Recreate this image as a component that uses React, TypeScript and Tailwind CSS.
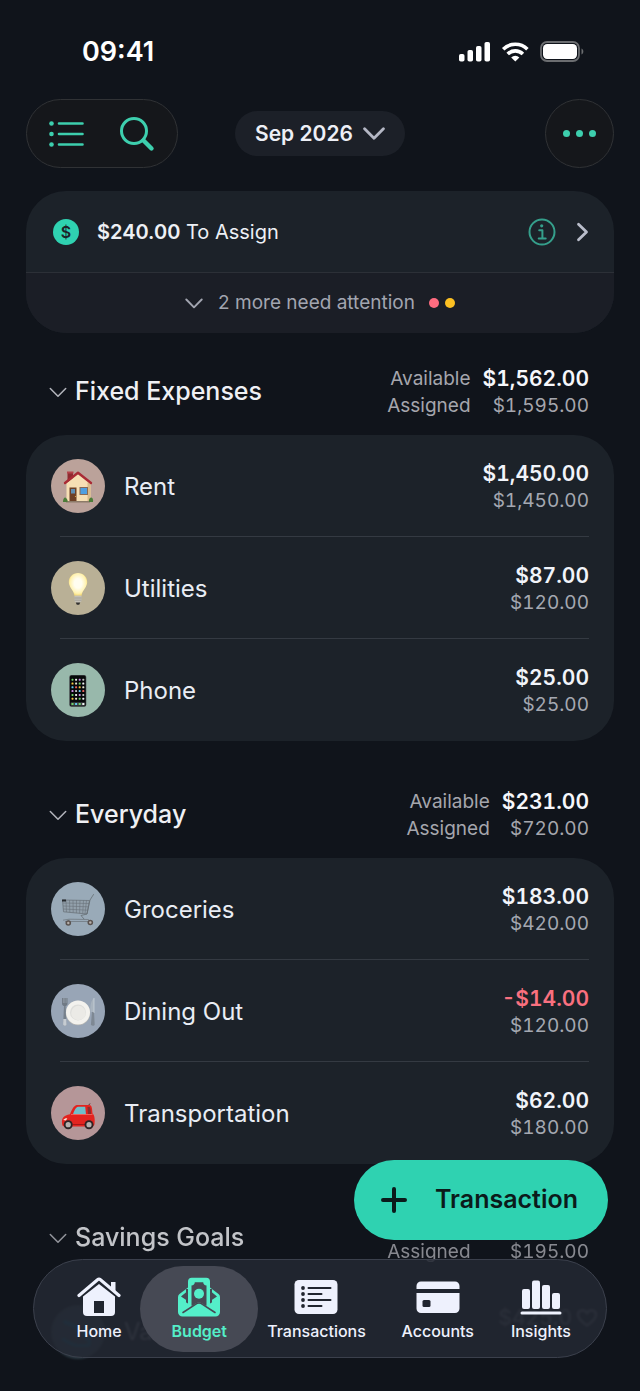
import type { ReactNode } from 'react';

interface Category {
  name: string;
  available: string;
  assigned: string;
  color: string;
  icon: ReactNode;
}

interface Group {
  name: string;
  available: string;
  assigned: string;
  categories: Category[];
}

function ChevronDown({ width, stroke, className }: { width: number; stroke: number; className: string }) {
  return (
    <svg width={width} viewBox="0 0 18 11" fill="none" stroke="currentColor" strokeWidth={stroke} strokeLinecap="round" strokeLinejoin="round" className={className} aria-hidden="true">
      <path d="M1.300 1.500 9 9.300l7.700-7.800" />
    </svg>
  );
}

function HouseArt() {
  return (
    <svg viewBox="0 0 54 54" className="size-full" aria-hidden="true">
      <path d="M16.500 13h5.500v7l-5.500 4z" fill="#8f2a30" />
      <path d="M16 12.500h6.500v2H16z" fill="#b5434a" />
      <path d="M15.500 24 27 15l12.500 9v19H15.500z" fill="#f6dfb4" />
      <path d="M36.500 23l3 2v18h-3z" fill="#d9ba89" />
      <path d="M14 24 27 13.800 40 24" fill="none" stroke="#a92b35" strokeWidth="2.400" strokeLinecap="round" strokeLinejoin="round" />
      <path d="M18.500 28.500h7V43h-7z" fill="#6d4026" />
      <path d="M20 30h4v4.500h-4z" fill="#5f8fb5" />
      <circle cx="24.500" cy="37.500" r=".6" fill="#e8b54d" />
      <path d="M28.500 28h8.500v8h-8.500z" fill="#8a6b55" />
      <path d="M29.500 29h6.500v6h-6.500z" fill="#4f9fe0" />
      <path d="M15 42h24v1.500H15z" fill="#8c7a68" />
      <path d="M12 43c0-4 2-5.500 3.500-3.500C17 41 17 43 16 43zM38 43c-.5-2.500.5-4 2-4.500 1.500 0 2.500 2 2 4.500z" fill="#4b7c38" />
    </svg>
  );
}

function BulbArt() {
  return (
    <svg viewBox="0 0 54 54" className="size-full" aria-hidden="true">
      <defs>
        <radialGradient id="bulb" cx=".5" cy=".45" r=".58">
          <stop offset=".35" stopColor="#fffdf0" />
          <stop offset=".75" stopColor="#fff2b0" />
          <stop offset="1" stopColor="#f2cf59" />
        </radialGradient>
      </defs>
      <path d="M27 12c-5.300 0-9.200 4-9.200 9 0 5.500 4.800 7.500 5.700 14h7c.9-6.500 5.700-8.500 5.700-14 0-5-3.900-9-9.200-9z" fill="url(#bulb)" />
      <path d="M23.500 34.500h7v5.500l-2 2h-3l-2-2z" fill="#c4c0b6" />
      <path d="M23.500 37h7M23.500 39.200h7" stroke="#96938c" strokeWidth=".7" />
      <path d="M24.800 41.500h4.400l-1 2.200h-2.400z" fill="#33312f" />
    </svg>
  );
}

const APP_COLORS = ['#6fd36b', '#f2f2f2', '#c88be0', '#bdbdbd', '#62c6ee', '#e9605a', '#f4c63d', '#e8e3d0'];

function PhoneArt() {
  const dots = Array.from({ length: 24 }, (_, i) => ({
    x: 20.500 + (i % 4) * 3.600,
    y: 15.700 + Math.floor(i / 4) * 3.800,
    fill: APP_COLORS[(i + Math.floor(i / 4) * 2) % APP_COLORS.length],
  }));
  return (
    <svg viewBox="0 0 54 54" className="size-full" aria-hidden="true">
      <rect x="18.300" y="12" width="17" height="31.800" rx="2" fill="#4c5254" />
      <rect x="18.900" y="12.500" width="15.800" height="30.800" rx="1.600" fill="#07080a" />
      {dots.map((d) => (
        <rect key={`${d.x}-${d.y}`} x={d.x} y={d.y} width="2" height="2" rx=".6" fill={d.fill} />
      ))}
      <rect x="19.600" y="39.300" width="14.400" height="3.400" rx=".8" fill="#3d4346" />
      <rect x="20.500" y="40" width="2" height="2" fill="#6fd36b" />
      <rect x="24.100" y="40" width="2" height="2" fill="#62c6ee" />
      <rect x="27.700" y="40" width="2" height="2" fill="#6fd36b" />
      <rect x="31.300" y="40" width="2" height="2" fill="#f2f2f2" />
    </svg>
  );
}

function CartArt() {
  return (
    <svg viewBox="0 0 54 54" className="size-full" fill="none" aria-hidden="true">
      <path d="M11.500 18 38.500 18.500 36 32 12.500 29.800z" fill="#8a949c" fillOpacity=".4" stroke="#6b747b" strokeWidth=".8" />
      <path d="M12 21l26 .5M12 24l25.500.8M12.200 27l24.800 1.200M15 18l.5 12M18.500 18l.3 12.300M22 18l.2 12.600M25.500 18l-.1 13M29 18.200 28.600 31.300M32.500 18.300 31.700 31.500M35.500 18.400 34 31.800" stroke="#69727a" strokeWidth=".6" />
      <path d="M42.500 12.500 39 18l-3 14-6 1.500 3 3.500" stroke="#666e74" strokeWidth=".8" strokeLinecap="round" />
      <path d="M12 38.200l6-1 19.500.3 1.500 2.500M18 37.500l-1 3M14 39.500h23" stroke="#717a81" strokeWidth=".8" />
      <path d="M11 17.500h4v2h-4z" fill="#272b2f" />
      <circle cx="17.300" cy="41" r="2.800" fill="#5a5350" />
      <circle cx="17.300" cy="41" r="1.200" fill="#b7b0ab" />
      <circle cx="39.300" cy="40.500" r="2.800" fill="#5a5350" />
      <circle cx="39.300" cy="40.500" r="1.200" fill="#b7b0ab" />
    </svg>
  );
}

function PlateArt() {
  return (
    <svg viewBox="0 0 54 54" className="size-full" aria-hidden="true">
      <path d="M11 14h5.500v5.500c0 1.500-1 2-1.500 2.500h-2.500c-.5-.5-1.500-1-1.500-2.500z" fill="#707a85" />
      <path d="M12.400 14v5M13.800 14v5M15.200 14v5" stroke="#a7b0ba" strokeWidth=".5" />
      <path d="M13 22h1.600l.9 18.500c0 1.700-3.400 1.700-3.400 0z" fill="#77818c" />
      <path d="M12.300 35h3l.3 5.500c0 1.700-3.500 1.700-3.500 0z" fill="#c6ccd2" />
      <path d="M43 14c-3.500 3-4 9-3.500 14h3.500z" fill="#a9b4bf" />
      <path d="M41 28h2l.7 12.500c0 1.700-4 1.700-3.800 0z" fill="#7e8893" />
      <path d="M43 14v15" stroke="#dae0e6" strokeWidth=".6" />
      <circle cx="27" cy="29" r="12.200" fill="#b9b9b5" />
      <circle cx="27" cy="28.400" r="12" fill="#f3f2ee" />
      <circle cx="27" cy="28.400" r="8" fill="#dededb" />
      <circle cx="27.400" cy="29" r="7.200" fill="#ebeae6" />
    </svg>
  );
}

function CarArt() {
  return (
    <svg viewBox="0 0 54 54" className="size-full" aria-hidden="true">
      <path d="M37 20l2-2.500" stroke="#4a2325" strokeWidth=".9" />
      <path d="M11 37c-.4-5 1.500-7.500 8-8.800 2-5.200 4-8.700 7-9.200h12c3 0 3 3 3.500 8.500 2.300 1.500 2.500 7 2 10.500-.2 1.500-1 2.500-2.500 2.500L13 40.500c-1.300-.3-2-1.500-2-3.500z" fill="#e3231f" />
      <path d="M22 28.200c1.300-4 3-7.200 5-7.500h7.200l.8 7.800z" fill="#6fbfca" />
      <path d="M36.500 21h2.200c1 1.500 1.200 4.500 1.300 7.200h-3z" fill="#8b2c2d" />
      <path d="M20 28.500h21.500" stroke="#f5645c" strokeWidth=".9" />
      <path d="M22 38.500h12" stroke="#9f1516" strokeWidth=".9" />
      <path d="M12.300 34c1-1.500 2.500-2 4-1.800L15 34.500z" fill="#f8e4d8" />
      <circle cx="17.200" cy="38.700" r="4.500" fill="#2d2425" />
      <circle cx="17.200" cy="38.700" r="2.600" fill="#b5b0ae" />
      <circle cx="38" cy="38.700" r="4.500" fill="#2d2425" />
      <circle cx="38" cy="38.700" r="2.600" fill="#b5b0ae" />
    </svg>
  );
}

const groups: Group[] = [
  {
    name: 'Fixed Expenses',
    available: '$1,562.00',
    assigned: '$1,595.00',
    categories: [
      { name: 'Rent', available: '$1,450.00', assigned: '$1,450.00', color: 'bg-[#bba29a]', icon: <HouseArt /> },
      { name: 'Utilities', available: '$87.00', assigned: '$120.00', color: 'bg-[#b9b096]', icon: <BulbArt /> },
      { name: 'Phone', available: '$25.00', assigned: '$25.00', color: 'bg-[#98b8ab]', icon: <PhoneArt /> },
    ],
  },
  {
    name: 'Everyday',
    available: '$231.00',
    assigned: '$720.00',
    categories: [
      { name: 'Groceries', available: '$183.00', assigned: '$420.00', color: 'bg-[#99aab8]', icon: <CartArt /> },
      { name: 'Dining Out', available: '-$14.00', assigned: '$120.00', color: 'bg-[#98a5b6]', icon: <PlateArt /> },
      { name: 'Transportation', available: '$62.00', assigned: '$180.00', color: 'bg-[#b59698]', icon: <CarArt /> },
    ],
  },
];

function StatusBar() {
  return (
    <div className="flex h-[99px] items-start justify-between pt-9 pr-[30px] pl-14">
      <span className="text-[27px] leading-8 font-semibold text-white">09:41</span>
      <svg width="125" height="32" viewBox="0 0 125 32" fill="#fff" aria-hidden="true">
        <rect x="0" y="18" width="5.500" height="7.500" rx="1.800" />
        <rect x="8.500" y="14" width="5.500" height="11.500" rx="1.800" />
        <rect x="17" y="10" width="5.500" height="15.500" rx="1.800" />
        <rect x="25.500" y="6" width="5.500" height="19.500" rx="1.800" />
        <g fill="none" stroke="#fff" strokeWidth="3.600">
          <path d="M44.200 13.200a17.300 17.300 0 0 1 24.200 0" />
          <path d="M48.700 18a10.900 10.900 0 0 1 15.200 0" />
        </g>
        <path d="M56.300 25.600l-4.100-4.200a5.800 5.800 0 0 1 8.200 0z" />
        <rect x="82" y="6" width="38" height="19" rx="6" fill="none" stroke="#6b6d70" strokeWidth="1.800" />
        <rect x="84" y="8" width="34" height="15" rx="4.200" />
        <path d="M122.500 12.500c2.400.8 2.400 5.200 0 6z" fill="#6b6d70" />
      </svg>
    </div>
  );
}

function Toolbar() {
  return (
    <header className="grid grid-cols-[1fr_auto_1fr] items-center">
      <div className="flex h-[69px] w-[152px] items-center justify-between rounded-full border border-[#303235] bg-[#15171b] px-[22px] text-[#3dcfae]">
        <button type="button" aria-label="List">
          <svg width="36" height="28" viewBox="0 0 36 28" fill="currentColor" aria-hidden="true">
            <circle cx="2.500" cy="3.500" r="2.300" />
            <circle cx="2.500" cy="14" r="2.300" />
            <circle cx="2.500" cy="24.500" r="2.300" />
            <path d="M10 3.500h23.500M10 14h23.500M10 24.500h23.500" stroke="currentColor" strokeWidth="2.600" strokeLinecap="round" />
          </svg>
        </button>
        <button type="button" aria-label="Search">
          <svg width="36" height="36" viewBox="0 0 36 36" fill="none" stroke="currentColor" strokeLinecap="round" aria-hidden="true">
            <circle cx="15" cy="15" r="12.500" strokeWidth="3" />
            <path d="M24.500 24.500l8 8" strokeWidth="4.400" />
          </svg>
        </button>
      </div>
      <button type="button" className="flex h-[45px] items-center gap-2.5 rounded-full bg-[#1c2028] px-5 text-[21px] font-semibold text-[#edeff6]">
        Sep 2026
        <ChevronDown width={22} stroke={2.3} className="text-[#b4b7c4]" />
      </button>
      <button
        type="button"
        aria-label="More"
        className="flex size-[69px] items-center justify-center gap-1.5 justify-self-end rounded-full border border-[#303235] bg-[#15171b]"
      >
        <span className="size-[7px] rounded-full bg-[#3dcfae]" />
        <span className="size-[7px] rounded-full bg-[#3dcfae]" />
        <span className="size-[7px] rounded-full bg-[#3dcfae]" />
      </button>
    </header>
  );
}

function AssignCard() {
  return (
    <section className="mt-[23px] overflow-hidden rounded-[40px] bg-[#1c2229]">
      <div className="flex h-[82px] items-center border-b border-[#2c3037] pr-[25px] pl-[27px] text-[#edf0f5]">
        <span className="flex size-[26px] items-center justify-center rounded-full bg-[#2fd2b1] text-base font-semibold text-[#1c2229]">$</span>
        <p className="ml-[18px] flex-1 text-xl">
          <span className="font-semibold">$240.00</span> To Assign
        </p>
        <button type="button" aria-label="About this amount" className="text-[#359f8b]">
          <svg width="28" height="28" viewBox="0 0 28 28" fill="none" stroke="currentColor" strokeWidth="2" aria-hidden="true">
            <circle cx="14" cy="14" r="12.500" />
            <circle cx="13.700" cy="7.800" r="1.600" fill="currentColor" stroke="none" />
            <path d="M11.200 12.300h3.200v8.200M10.700 20.500h7" strokeLinecap="round" strokeLinejoin="round" />
          </svg>
        </button>
        <svg width="13" height="20" viewBox="0 0 13 20" fill="none" stroke="#b9bdca" strokeWidth="2.800" strokeLinecap="round" strokeLinejoin="round" className="ml-5" aria-hidden="true">
          <path d="M2.500 2.200 10.500 10l-8 7.800" />
        </svg>
      </div>
      <button type="button" className="flex h-[60px] w-full items-center justify-center bg-[#1b1e26] text-[19px] text-[#a2a5b0]">
        <ChevronDown width={18} stroke={1.9} className="" />
        <span className="ml-[15px]">2 more need attention</span>
        <span className="ml-3.5 size-2.5 rounded-full bg-[#ff6c80]" />
        <span className="ml-1.5 size-2.5 rounded-full bg-[#fcc022]" />
      </button>
    </section>
  );
}

function GroupHeader({ name, available, assigned, dimmed }: { name: string; available: string; assigned: string; dimmed?: boolean }) {
  return (
    <div className={dimmed ? 'flex items-center pt-px pr-[25px] pl-[23px] opacity-80' : 'flex items-center pt-px pr-[25px] pl-[23px]'}>
      <ChevronDown width={18} stroke={1.5} className="text-[#b3b5bc]" />
      <h2 className="ml-2 flex-1 text-[25px] font-medium text-[#eff0f4]">{name}</h2>
      <dl className="grid grid-cols-[auto_auto] gap-x-3 text-right leading-[27px] text-[#a5a6ad]">
        <dt className="text-[19px]">Available</dt>
        <dd className="text-[21px] font-semibold text-[#f6f7fb] tabular-nums">{available}</dd>
        <dt className="text-[19px]">Assigned</dt>
        <dd className="text-[19px] tabular-nums">{assigned}</dd>
      </dl>
    </div>
  );
}

function CategoryRow({ category }: { category: Category }) {
  const overspent = category.available.startsWith('-');
  return (
    <li className="group">
      <div className="flex h-[101px] items-center px-[25px]">
        <span className={`size-[54px] shrink-0 overflow-hidden rounded-full ${category.color}`}>{category.icon}</span>
        <span className="ml-[19px] flex-1 pt-0.5 text-2xl text-[#e9edf4]">{category.name}</span>
        <div className="pt-0.5 text-right leading-[27px] tabular-nums">
          <p className={overspent ? 'text-[21px] font-semibold text-[#f9707f]' : 'text-[21px] font-semibold text-[#f1f4fa]'}>
            {category.available}
          </p>
          <p className="text-[19px] text-[#a4a8b1]">{category.assigned}</p>
        </div>
      </div>
      <div className="mr-[25px] ml-[34px] h-px bg-[#343a42] group-last:bg-transparent" />
    </li>
  );
}

// First savings row, seen only as a faint shape through the tab bar
function FadedRow() {
  return (
    <div className="flex h-[101px] items-center pr-4 pl-[25px] opacity-40 blur-[1px]">
      <span className="size-[54px] shrink-0 overflow-hidden rounded-full bg-[#53707c]">
        <svg viewBox="0 0 54 54" className="size-full" fill="none" stroke="#1ba3d6" strokeLinecap="round" aria-hidden="true">
          <path d="M14 17c9 3 17 8 22 17" strokeWidth="4" />
          <path d="M12 34c8 6 15 8 26 6" strokeWidth="3" />
          <path d="M36 20c3 6 4 12 2 19" strokeWidth="3" />
        </svg>
      </span>
      <span className="ml-[19px] flex-1 text-2xl text-[#e9edf4]">Vac</span>
      <span className="mb-[27px] text-[21px] font-semibold text-[#a4a8b1] tabular-nums">$425.0</span>
      <svg width="22" height="20" viewBox="0 0 22 20" fill="none" stroke="#a4a8b1" strokeWidth="2.600" className="mb-[27px] ml-1" aria-hidden="true">
        <path d="M11 17.500C5 13.500 2 10 2 6.500 2 2.500 8 .5 11 5c3-4.500 9-2.500 9 1.500 0 3.500-3 7-9 11z" />
      </svg>
    </div>
  );
}

function HomeIcon() {
  return (
    <svg width="44" height="40" viewBox="0 0 44 40" aria-hidden="true">
      <path d="M6 19.500 22 7l16 12.500V35a4 4 0 0 1-4 4H10a4 4 0 0 1-4-4z" fill="#eef1fd" />
      <path d="M2 18.500 20.500 3a2.500 2.500 0 0 1 3 0L42 18.500" fill="none" stroke="#20252f" strokeWidth="6" />
      <path d="M34 12V5h4.500v10" fill="#eef1fd" />
      <path d="M2 18.500 20.500 2.700a2.500 2.500 0 0 1 3 0L42 18.500" fill="none" stroke="#eef1fd" strokeWidth="3.200" strokeLinecap="round" />
      <path d="M17 24h10v12H17z" fill="#20252f" />
    </svg>
  );
}

function BudgetIcon() {
  return (
    <svg width="44" height="40" viewBox="0 0 44 40" aria-hidden="true">
      <path d="M11 10.500 2.500 17A4 4 0 0 0 1 20v15h42V20a4 4 0 0 0-1.500-3L33 10.500z" fill="#54efc9" />
      <path d="M10 14.500 4 19.500l6 4zM34 14.500l6 5-6 4z" fill="#464954" />
      <path d="M9 12h26v18H9z" fill="#464954" />
      <path d="M11 30V4.500A3.800 3.800 0 0 1 14.800.7h14.400A3.800 3.800 0 0 1 33 4.500V30z" fill="#54efc9" />
      <path d="M14.500 30V8.500c2 0 3.300-1.200 3.300-3.200h8.400c0 2 1.300 3.200 3.300 3.200V30z" fill="#464954" />
      <circle cx="22" cy="16.800" r="5" fill="#54efc9" />
      <path d="M1 20.500 15 29l3.500-2.300a6 6 0 0 1 7 0L29 29l14-8.500V35a4.500 4.500 0 0 1-4.500 4.500h-33A4.500 4.500 0 0 1 1 35z" fill="#54efc9" />
      <path d="M6 35.500 18.500 27.300a6 6 0 0 1 7 0L38 35.500" fill="none" stroke="#464954" strokeWidth="1.600" strokeLinecap="round" />
    </svg>
  );
}

function TransactionsIcon() {
  return (
    <svg width="44" height="40" viewBox="0 0 44 40" aria-hidden="true">
      <rect x=".5" y="3" width="43" height="34" rx="4.500" fill="#eef1fd" />
      <g fill="#20252f">
        <circle cx="9" cy="11" r="1.900" />
        <circle cx="9" cy="17" r="1.900" />
        <circle cx="9" cy="23" r="1.900" />
        <circle cx="9" cy="29" r="1.900" />
      </g>
      <path d="M14.500 11h22M14.500 17h13M14.500 23h22M14.500 29h13" stroke="#20252f" strokeWidth="2" strokeLinecap="round" />
    </svg>
  );
}

function AccountsIcon() {
  return (
    <svg width="44" height="40" viewBox="0 0 44 40" aria-hidden="true">
      <path d="M.5 12V9A4.500 4.500 0 0 1 5 4.500h34A4.500 4.500 0 0 1 43.500 9v3zM.5 16h43v15.500A4.500 4.500 0 0 1 39 36H5a4.500 4.500 0 0 1-4.500-4.500z" fill="#eef1fd" />
      <rect x="6.500" y="23" width="8" height="7" rx="1.500" fill="#20252f" />
    </svg>
  );
}

function InsightsIcon() {
  return (
    <svg width="44" height="40" viewBox="0 0 44 40" fill="#eef1fd" aria-hidden="true">
      <rect x="3" y="12" width="8" height="20" rx="2" />
      <rect x="13" y="3.500" width="8" height="28.500" rx="2" />
      <rect x="23" y="8" width="8" height="24" rx="2" />
      <rect x="33" y="16" width="8" height="16" rx="2" />
      <rect x="1.500" y="34.500" width="41" height="3" rx="1.500" />
    </svg>
  );
}

const tabs = [
  { name: 'Home', icon: <HomeIcon /> },
  { name: 'Budget', icon: <BudgetIcon />, active: true },
  { name: 'Transactions', icon: <TransactionsIcon /> },
  { name: 'Accounts', icon: <AccountsIcon /> },
  { name: 'Insights', icon: <InsightsIcon /> },
];

function TabBar() {
  return (
    <nav className="absolute inset-x-[33px] bottom-[33px] grid h-[99px] grid-cols-[82fr_118fr_116fr_126fr_80fr] items-center rounded-full border border-[#3b404c] bg-[#232833]/85 pr-[25px] pl-6">
      {tabs.map((tab) => (
        <a
          key={tab.name}
          href="#"
          aria-current={tab.active ? 'page' : undefined}
          className={
            tab.active
              ? 'flex h-[86px] flex-col items-center justify-center gap-0.5 rounded-full bg-[#464954] pt-[3px] text-base font-semibold text-[#54efc9]'
              : 'flex h-[86px] flex-col items-center justify-center gap-0.5 pt-[3px] text-base font-medium text-[#eef1fd]'
          }
        >
          {tab.icon}
          {tab.name}
        </a>
      ))}
    </nav>
  );
}

export default function App() {
  return (
    <div className="relative h-screen overflow-hidden bg-[#10141b] font-['Inter',sans-serif]">
      <div className="px-[26px]">
        <StatusBar />
        <Toolbar />
        <AssignCard />
        <main className="mt-[31px] flex flex-col gap-[46px]">
          {groups.map((group) => (
            <section key={group.name}>
              <GroupHeader name={group.name} available={group.available} assigned={group.assigned} />
              <ul className="mt-4 rounded-[40px] bg-[#1c2229]">
                {group.categories.map((category) => (
                  <CategoryRow key={category.name} category={category} />
                ))}
              </ul>
            </section>
          ))}
          <section>
            <GroupHeader name="Savings Goals" available="$1,425.00" assigned="$195.00" dimmed />
            <div className="mt-4">
              <FadedRow />
            </div>
          </section>
        </main>
      </div>
      <button
        type="button"
        className="absolute right-8 bottom-[151px] flex h-20 items-center gap-[27px] rounded-full bg-[#2fd2b1] pr-[30px] pl-[26px] text-[25px] font-semibold text-[#0b1b1b]"
      >
        <svg width="28" height="28" viewBox="0 0 28 28" fill="none" stroke="currentColor" strokeWidth="4" strokeLinecap="round" aria-hidden="true">
          <path d="M14 3v22M3 14h22" />
        </svg>
        Transaction
      </button>
      <TabBar />
    </div>
  );
}
